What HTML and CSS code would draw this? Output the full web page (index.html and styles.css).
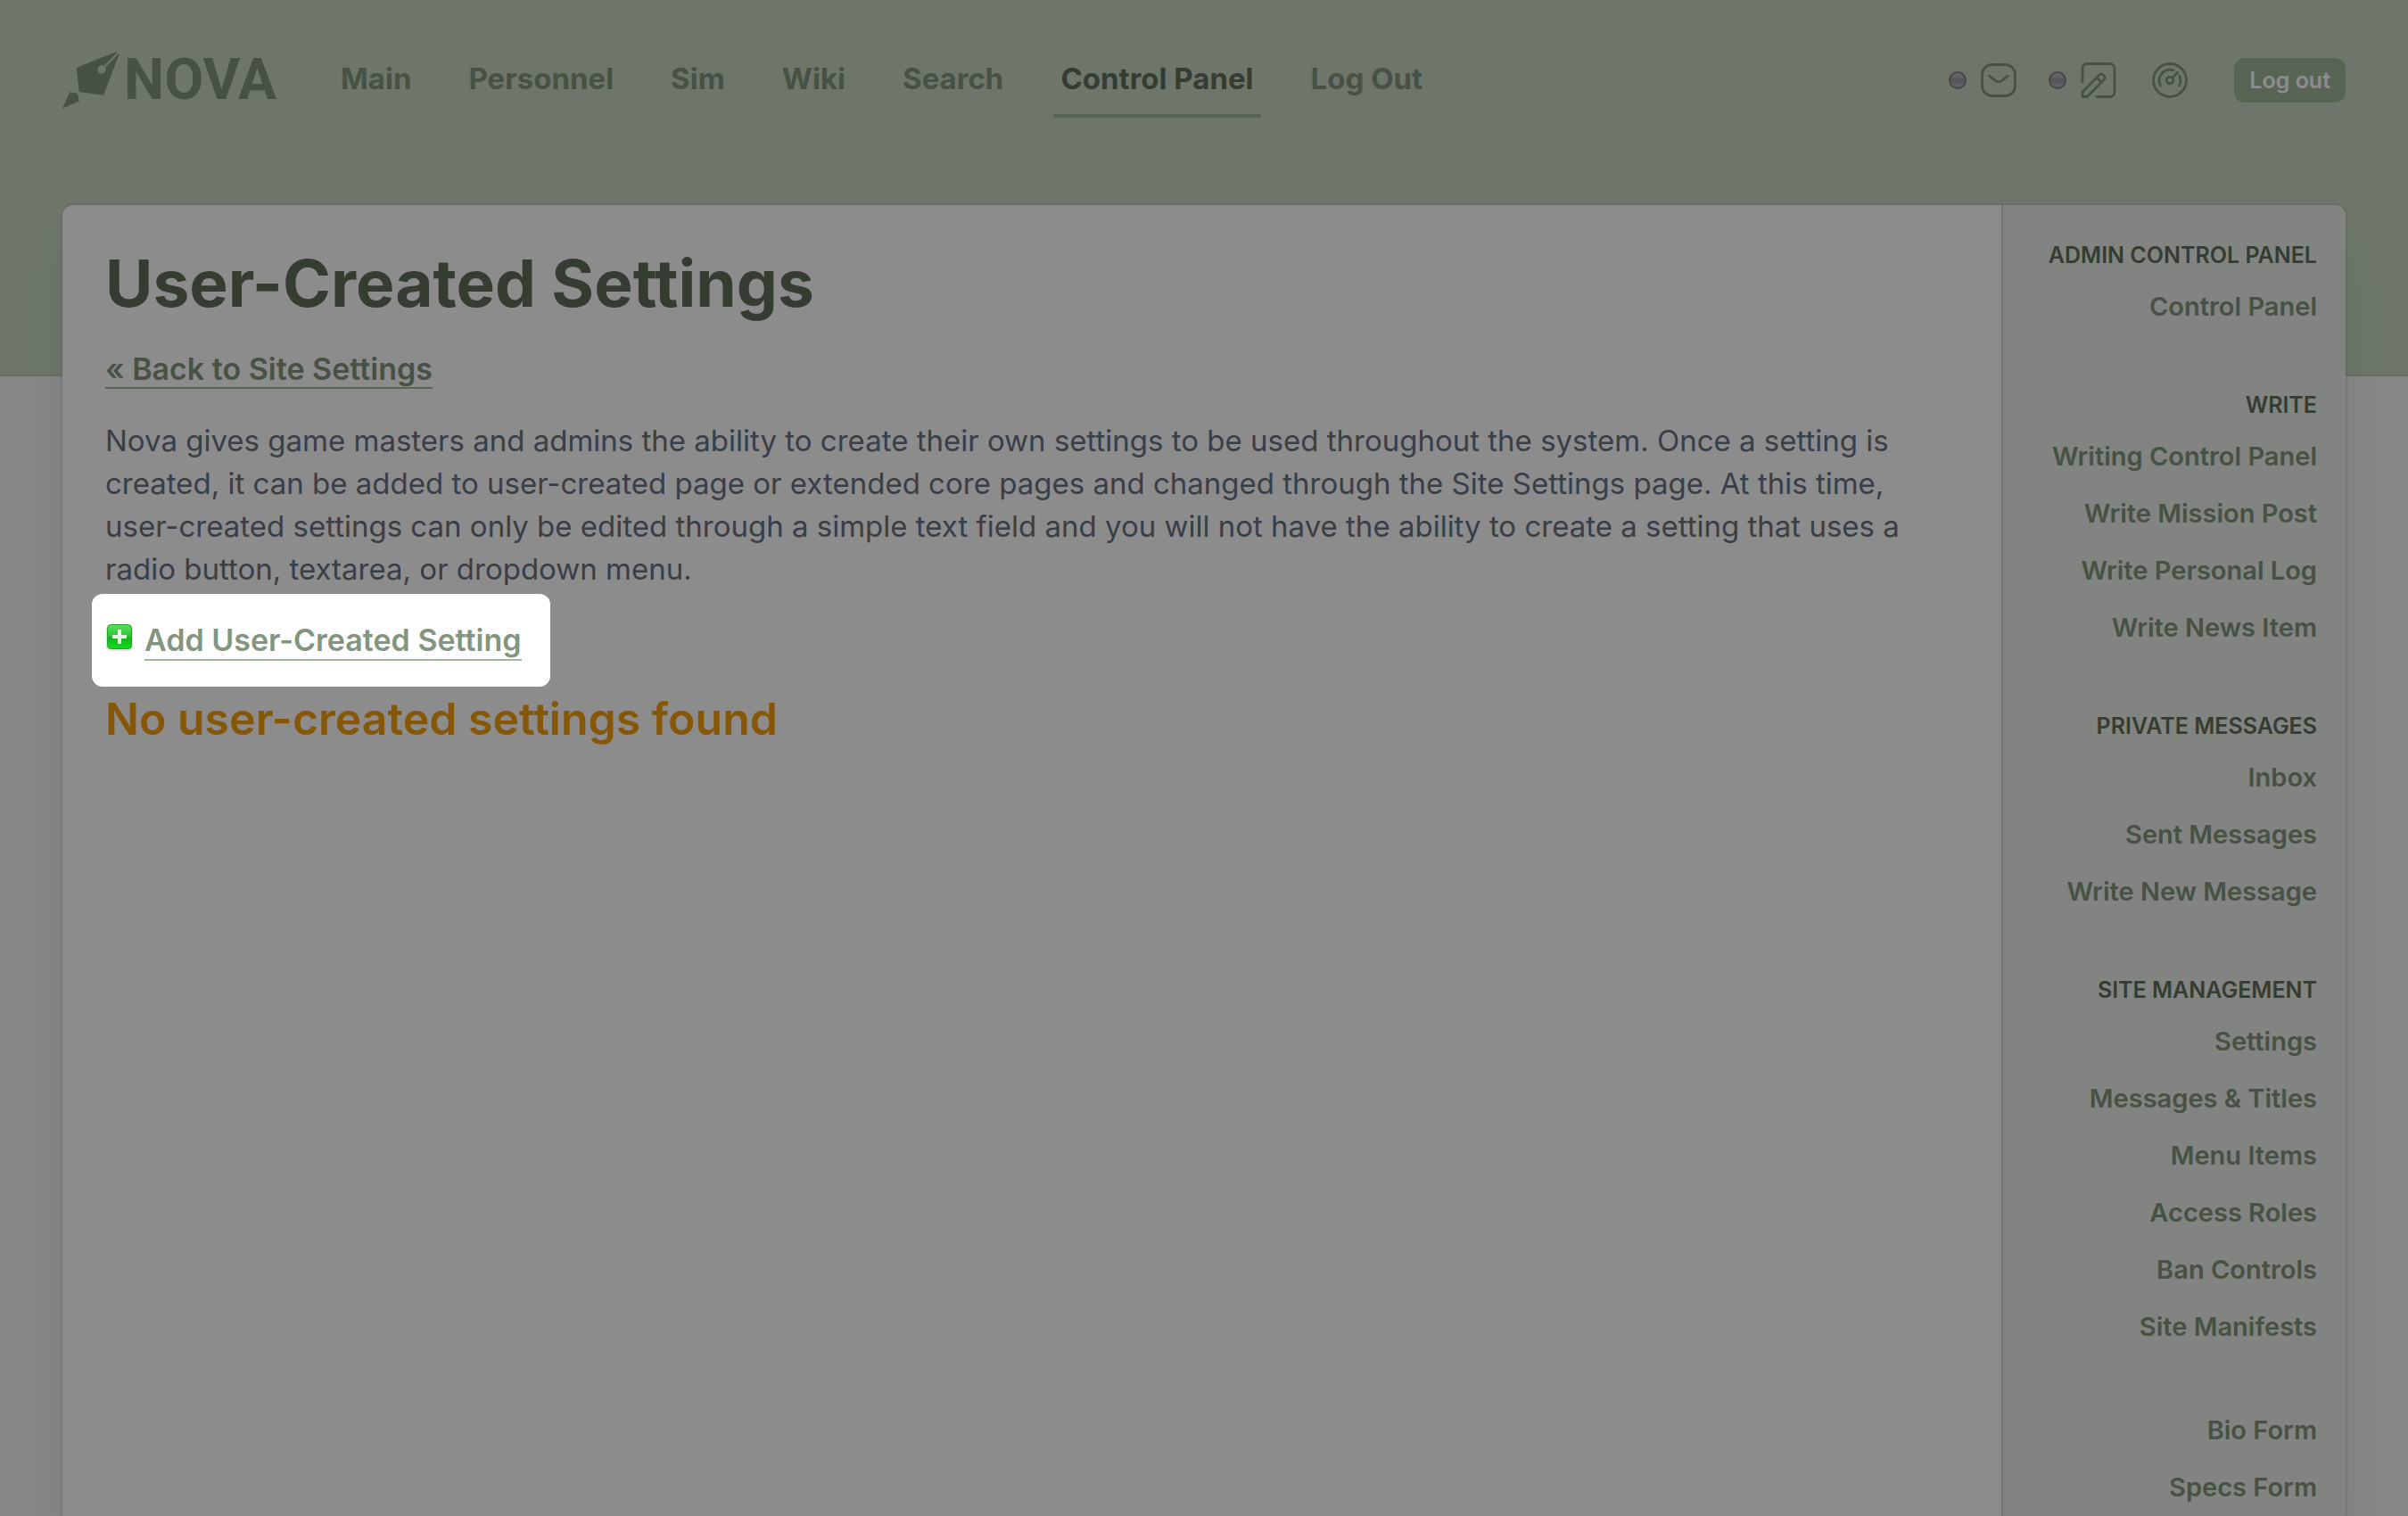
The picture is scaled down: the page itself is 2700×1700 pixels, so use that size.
FILE: index.html
```html
<!DOCTYPE html>
<html lang="en">
<head>
<meta charset="utf-8">
<meta name="viewport" content="width=device-width, initial-scale=1">
<title>User-Created Settings</title>
<link rel="stylesheet" href="styles.css">
</head>
<body>
<div class="band">
  <header class="header">
    <a class="logo" href="#">
      <svg class="logo-mark" viewBox="90 55 195 192" aria-hidden="true">
        <path d="M272 55 137 109 146 190 228 201 282 62Z" fill="currentColor"/>
        <path d="M115 190 140 195 147 221 90 246Z" fill="currentColor"/>
        <path class="logo-slit" d="M281 55 228 109"/>
        <circle class="logo-hole" cx="222" cy="115" r="14"/>
      </svg>
      <span>NOVA</span>
    </a>
    <nav class="nav">
      <a href="#">Main</a>
      <a href="#">Personnel</a>
      <a href="#">Sim</a>
      <a href="#">Wiki</a>
      <a href="#">Search</a>
      <a class="active" href="#">Control Panel</a>
      <a href="#">Log Out</a>
    </nav>
    <div class="user">
      <a class="user-link" href="#" aria-label="Inbox">
        <span class="dot"></span>
        <svg class="icon" viewBox="0 0 24 24" aria-hidden="true"><rect x="2.75" y="3.25" width="18.5" height="17.5" rx="5.5"/><path d="M6.9 9.6 10.3 12.3Q12 13.5 13.7 12.3L17.1 9.6"/></svg>
      </a>
      <a class="user-link" href="#" aria-label="Writing">
        <span class="dot"></span>
        <svg class="icon" viewBox="0 0 24 24" aria-hidden="true"><path d="M3 13V5.5A2.75 2.75 0 0 1 5.75 2.75h12.5A2.75 2.75 0 0 1 21 5.5v13a2.75 2.75 0 0 1-2.75 2.75H11"/><path d="M3 21.25V18.6L12.6 8.8a1.2 1.2 0 0 1 1.7 0l1 1a1.2 1.2 0 0 1 0 1.7L5.6 21.25ZM11 10.5l2.7 2.7"/></svg>
      </a>
      <a class="user-link" href="#" aria-label="Dashboard">
        <svg class="icon" viewBox="0 0 24 24" aria-hidden="true"><circle cx="12" cy="12" r="9.25"/><circle cx="12" cy="12" r="1.9"/><path d="M13.4 10.6 16.3 7.7M6.8 15A6 6 0 0 1 13.9 6.4M17.4 9.7a6 6 0 0 1-.1 5.2"/></svg>
      </a>
      <button class="logout" type="button">Log out</button>
    </div>
  </header>
</div>

<main class="card">
  <section class="content">
    <h1>User-Created Settings</h1>
    <p><a class="link" href="#">« Back to Site Settings</a></p>
    <p>Nova gives game masters and admins the ability to create their own settings to be used throughout the system. Once a setting is created, it can be added to user-created page or extended core pages and changed through the Site Settings page. At this time, user-created settings can only be edited through a simple text field and you will not have the ability to create a setting that uses a radio button, textarea, or dropdown menu.</p>
    <p class="add">
      <svg class="add-icon" viewBox="0 0 32 32" aria-hidden="true">
        <defs><linearGradient id="green" x1="0" y1="0" x2="0" y2="1"><stop offset="0" stop-color="#5be05f"/><stop offset=".45" stop-color="#2fc636"/><stop offset=".55" stop-color="#12b41a"/><stop offset="1" stop-color="#15dd1d"/></linearGradient></defs>
        <rect x="1" y="3" width="30" height="29" rx="5" fill="#000" opacity=".12"/>
        <rect x="2.5" y="2.5" width="27" height="27" rx="4" fill="url(#green)" stroke="#1fa326"/>
        <path d="M14 8h4v6h6v4h-6v6h-4v-6H8v-4h6Z" fill="#e9f3e9"/>
      </svg>
      <a class="link" href="#">Add User-Created Setting</a>
    </p>
    <h2>No user-created settings found</h2>
  </section>
  <aside class="sidebar">
    <section>
      <h3>Admin Control Panel</h3>
      <ul><li><a href="#">Control Panel</a></li></ul>
    </section>
    <section>
      <h3>Write</h3>
      <ul>
        <li><a href="#">Writing Control Panel</a></li>
        <li><a href="#">Write Mission Post</a></li>
        <li><a href="#">Write Personal Log</a></li>
        <li><a href="#">Write News Item</a></li>
      </ul>
    </section>
    <section>
      <h3>Private Messages</h3>
      <ul>
        <li><a href="#">Inbox</a></li>
        <li><a href="#">Sent Messages</a></li>
        <li><a href="#">Write New Message</a></li>
      </ul>
    </section>
    <section>
      <h3>Site Management</h3>
      <ul>
        <li><a href="#">Settings</a></li>
        <li><a href="#">Messages &amp; Titles</a></li>
        <li><a href="#">Menu Items</a></li>
        <li><a href="#">Access Roles</a></li>
        <li><a href="#">Ban Controls</a></li>
        <li><a href="#">Site Manifests</a></li>
      </ul>
    </section>
    <section>
      <ul>
        <li><a href="#">Bio Form</a></li>
        <li><a href="#">Specs Form</a></li>
      </ul>
    </section>
  </aside>
</main>
</body>
</html>
```
FILE: styles.css
```css
:root {
  --sage-50: #ecf0e9;
  --sage-200: #c8d8c4;
  --sage-300: #b9cbb3;
  --sage-400: #a1b69a;
  --sage-500: #82957e;
  --sage-700: #626f5e;
}

* { box-sizing: border-box; }

body {
  margin: 0;
  min-height: 100vh;
  display: flex;
  flex-direction: column;
  background: #f4f4f5;
  color: #6b7280;
  font: 33px/48px Inter, "Liberation Sans", sans-serif;
}

h1, h2, h3, p, ul { margin: 0; padding: 0; }
ul { list-style: none; }
a { color: var(--sage-500); text-decoration: none; }

.band {
  height: 422px;
  flex: none;
  background: var(--sage-200);
  border-bottom: 2px solid var(--sage-300);
}

.header {
  display: flex;
  align-items: center;
  height: 180px;
  padding: 0 70px;
}

.logo {
  display: flex;
  align-items: center;
  gap: 4px;
  margin-right: 64px;
  font: 700 64px/64px Roboto, sans-serif;
}
.logo-mark { width: 65px; height: 64px; }
.logo-slit { stroke: var(--sage-200); stroke-width: 7; }
.logo-hole { fill: var(--sage-200); }

.nav { display: flex; gap: 48px; }
.nav a {
  padding: 16px 8px;
  border-bottom: 4px solid transparent;
  font-weight: 700;
  white-space: nowrap;
}
.nav .active { color: var(--sage-700); border-color: var(--sage-400); }

.user { display: flex; align-items: center; gap: 32px; margin-left: auto; }
.user-link { display: flex; align-items: center; gap: 12px; }
.icon {
  width: 48px;
  height: 48px;
  fill: none;
  stroke: currentColor;
  stroke-width: 1.4;
  stroke-linecap: round;
  stroke-linejoin: round;
}
.dot {
  width: 20px;
  height: 20px;
  border: 2px solid #808085;
  border-radius: 50%;
  background: linear-gradient(#c4c4c8, #98989c 50%, #b8b8bc);
}
.logout {
  height: 50px;
  margin-left: 16px;
  padding: 0 17px;
  border: 0;
  border-radius: 12px;
  background: var(--sage-400);
  color: #fff;
  font: 600 25px/50px Inter, sans-serif;
}

.card {
  display: flex;
  flex: 1;
  margin: -192px 70px 0;
  border-radius: 12px 12px 0 0;
  background: #fff;
  box-shadow: 0 0 0 2px rgba(17, 24, 39, .07), 0 40px 50px -10px rgba(17, 24, 39, .1);
}

.content {
  flex: 1;
  display: flex;
  flex-direction: column;
  gap: 32px;
  padding: 48px;
}
h1 { font-size: 73px; line-height: 80px; color: var(--sage-700); }
h2 { font-size: 50px; line-height: 64px; font-weight: 600; color: #f59e0b; }
.link {
  border-bottom: 2px solid var(--sage-400);
  font-size: 34px;
  font-weight: 600;
}

/* The tour step dims the whole page except the highlighted link. */
.add {
  position: relative;
  z-index: 10;
  display: flex;
  align-items: flex-start;
  align-self: flex-start;
  gap: 12px;
  height: 48px;
}
.add::before {
  content: "";
  position: absolute;
  inset: -28px -32px -28px -15px;
  border-radius: 12px;
  box-shadow: 0 0 0 4000px rgba(0, 0, 0, .45);
  pointer-events: none;
}
.add-icon { width: 32px; height: 32px; margin-top: 4px; }
.add .link { line-height: 42px; margin-top: 3px; }

.sidebar {
  flex: none;
  width: 386px;
  display: flex;
  flex-direction: column;
  gap: 52px;
  padding: 30px 32px 0 0;
  border-left: 2px solid var(--sage-200);
  border-radius: 0 12px 0 0;
  background: var(--sage-50);
  text-align: right;
}
.sidebar h3 {
  color: var(--sage-700);
  font-size: 25px;
  font-weight: 600;
  line-height: 52px;
  text-transform: uppercase;
}
.sidebar li { font-size: 29px; font-weight: 600; line-height: 64px; }
```
